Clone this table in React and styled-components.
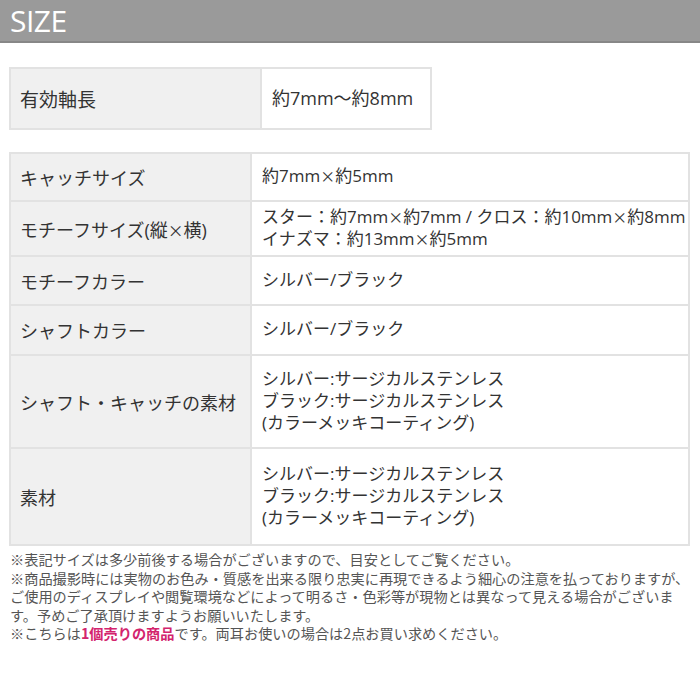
import React from 'react';
import styled, { createGlobalStyle } from 'styled-components';

const GlobalStyle = createGlobalStyle`
  body {
    margin: 0;
    background: #fff;
    font-family: "Open Sans", "Noto Sans CJK JP", sans-serif;
    color: #333;
  }
`;

const Root = styled.div`
  width: 700px;
  min-height: 700px;
  background: #fff;
`;

const Header = styled.div`
  height: 41px;
  display: flex;
  align-items: center;
  padding-left: 10px;
  background: #9a9a9a;
  border-bottom: 2px solid #878787;
  color: #fff;
  font-family: "Open Sans", sans-serif;
  font-size: 30px;
  letter-spacing: -0.5px;
`;

const Table = styled.table`
  width: ${p => p.w}px;
  margin: ${p => p.top}px 0 0 9px;
  border-collapse: collapse;
  border: 2px solid #e2e2e2;
  table-layout: fixed;
`;

const Row = styled.tr`
  height: ${p => p.h}px;
`;

const Label = styled.th`
  box-sizing: border-box;
  width: ${p => p.w}px;
  padding: 0 0 0 9px;
  background: #f0f0f0;
  border: 2px solid #e2e2e2;
  text-align: left;
  font-weight: normal;
  font-size: ${p => p.size || 18}px;
  color: #333;
  white-space: nowrap;
`;

const Value = styled.td`
  padding: 0 0 2px 10px;
  border: 2px solid #e2e2e2;
  font-size: ${p => p.size || 17}px;
  line-height: 22px;
  color: #333;
  white-space: nowrap;
`;

const Times = styled.span`
  font-family: "Noto Sans CJK JP", sans-serif;
  font-size: 0.88em;
`;

const Notes = styled.div`
  margin-top: 4px;
  padding: 0 10px;
  font-family: "Noto Sans CJK JP", sans-serif;
  font-size: 14.2px;
  line-height: 18.5px;
  color: #555;
  white-space: nowrap;
`;

const Pink = styled.span`
  color: #d3246d;
  font-weight: bold;
`;

// split on × so the sign gets the wide CJK glyph
const withTimes = text =>
  text.split('×').map((part, i) => (
    <React.Fragment key={i}>
      {i > 0 && <Times>×</Times>}
      {part}
    </React.Fragment>
  ));

const specs = [
  { label: 'キャッチサイズ', h: 48, value: ['約7mm×約5mm'] },
  { label: 'モチーフサイズ(縦×横)', h: 55, value: ['スター：約7mm×約7mm / クロス：約10mm×約8mm', 'イナズマ：約13mm×約5mm'] },
  { label: 'モチーフカラー', h: 49, value: ['シルバー/ブラック'] },
  { label: 'シャフトカラー', h: 50, value: ['シルバー/ブラック'] },
  { label: 'シャフト・キャッチの素材', h: 93, value: ['シルバー:サージカルステンレス', 'ブラック:サージカルステンレス', '(カラーメッキコーティング)'] },
  { label: '素材', h: 97, value: ['シルバー:サージカルステンレス', 'ブラック:サージカルステンレス', '(カラーメッキコーティング)'] },
];

export default function App() {
  return (
    <Root>
      <GlobalStyle />
      <Header>SIZE</Header>

      <Table w={423} top={24}>
        <tbody>
          <Row h={61}>
            <Label w={251} size={19}>有効軸長</Label>
            <Value size={18}>約7mm〜約8mm</Value>
          </Row>
        </tbody>
      </Table>

      <Table w={681} top={22}>
        <tbody>
          {specs.map((s, i) => (
            <Row h={s.h} key={i}>
              <Label w={241}>{withTimes(s.label)}</Label>
              <Value>
                {s.value.map((line, j) => (
                  <div key={j}>{withTimes(line)}</div>
                ))}
              </Value>
            </Row>
          ))}
        </tbody>
      </Table>

      <Notes>
        ※表記サイズは多少前後する場合がございますので、目安としてご覧ください。<br />
        ※商品撮影時には実物のお色み・質感を出来る限り忠実に再現できるよう細心の注意を払っておりますが、<br />
        ご使用のディスプレイや閲覧環境などによって明るさ・色彩等が現物とは異なって見える場合がございま<br />
        す。予めご了承頂けますようお願いいたします。<br />
        ※こちらは<Pink>1個売りの商品</Pink>です。両耳お使いの場合は2点お買い求めください。
      </Notes>
    </Root>
  );
}
